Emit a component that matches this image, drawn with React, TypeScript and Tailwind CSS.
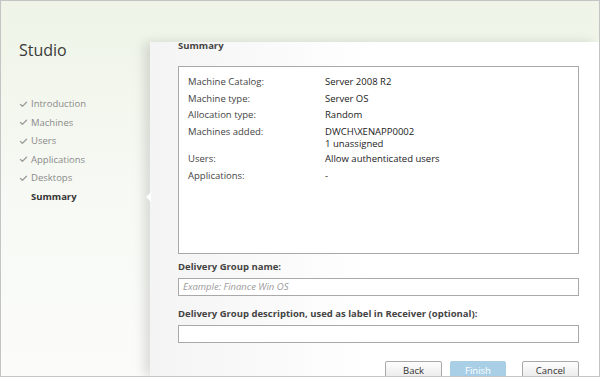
import { Check } from "lucide-react";

const steps = ["Introduction", "Machines", "Users", "Applications", "Desktops"];

const rows: [string, string[]][] = [
  ["Machine Catalog:", ["Server 2008 R2"]],
  ["Machine type:", ["Server OS"]],
  ["Allocation type:", ["Random"]],
  ["Machines added:", ["DWCH\\XENAPP0002", "1 unassigned"]],
  ["Users:", ["Allow authenticated users"]],
  ["Applications:", ["-"]],
];

export default function App() {
  return (
    <div
      className="flex h-[377px] w-[600px] overflow-hidden border border-[#c4c4c4] bg-gradient-to-b from-[#eef4e7] via-[#f7f9f4] to-[#fbfcfa] text-[#333]"
      style={{ fontFamily: '"Open Sans", "Noto Sans", sans-serif' }}
    >
      <aside className="w-[149px] shrink-0 pl-[18px]">
        <h1 className="mt-[38px] text-[16px] leading-[22px] text-[#3a3a3a]">Studio</h1>
        <ul className="mt-[36px] flex flex-col gap-[4.6px] text-[9.5px] leading-[14px] text-[#8a8a8a]">
          {steps.map((s) => (
            <li key={s} className="flex items-center gap-[3px]">
              <Check size={9} strokeWidth={3.5} className="text-[#9a9a9a]" />
              {s}
            </li>
          ))}
          <li className="pl-[12px] font-bold text-[#333]">Summary</li>
        </ul>
      </aside>

      <main className="relative mt-[41px] flex-1 bg-gradient-to-r from-[#f4f4f4] via-white to-white pl-[28px] pr-[20px] shadow-[-6px_0_10px_rgba(0,0,0,0.12)]">
        <div className="absolute left-[-4px] top-[150px] h-0 w-0 border-y-[5px] border-r-[5px] border-y-transparent border-r-white" />
        <h2 className="mt-[-3px] text-[9.5px] font-bold leading-[14px] text-[#444]">Summary</h2>

        <div className="mt-[13px] h-[188px] border border-[#a9a9a9] bg-white pl-[9px] pt-[7px]">
          <dl className="flex flex-col text-[9.5px]">
            {rows.map(([k, v]) => (
              <div key={k} className="flex">
                <dt className="w-[137px] shrink-0 leading-[16.5px] text-[#444]">{k}</dt>
                <dd className={v.length > 1 ? "pb-[1px] text-[#222]" : "text-[#222]"}>
                  {v.map((line, i) => (
                    <div key={line} className={i === 0 ? "leading-[16.5px]" : "mt-[-3px] leading-[13px]"}>
                      {line}
                    </div>
                  ))}
                </dd>
              </div>
            ))}
          </dl>
        </div>

        <label className="mt-[6px] block text-[9.5px] font-bold leading-[14px] text-[#444]">
          Delivery Group name:
        </label>
        <div className="mt-[4px] flex h-[18px] items-center border border-[#a9a9a9] bg-white pl-[4px] text-[9.5px] italic text-[#9a9a9a]">
          Example: Finance Win OS
        </div>

        <label className="mt-[11px] block text-[9.5px] font-bold leading-[14px] text-[#444]">
          Delivery Group description, used as label in Receiver (optional):
        </label>
        <div className="mt-[4px] h-[18px] border border-[#a9a9a9] bg-white" />

        <div className="mt-[18px] flex justify-end gap-[8px] text-[9.5px]">
          <button className="h-[20px] w-[57px] rounded-[2px] border border-[#a9a9a9] bg-gradient-to-b from-[#fdfdfd] to-[#e8e8e8] text-[#333]">
            Back
          </button>
          <button className="h-[20px] w-[56px] rounded-[2px] border border-[#a9cde3] bg-[#a9cfe6] text-white">
            Finish
          </button>
          <button className="ml-[8px] h-[20px] w-[57px] rounded-[2px] border border-[#a9a9a9] bg-gradient-to-b from-[#fdfdfd] to-[#e8e8e8] text-[#333]">
            Cancel
          </button>
        </div>
      </main>
    </div>
  );
}
